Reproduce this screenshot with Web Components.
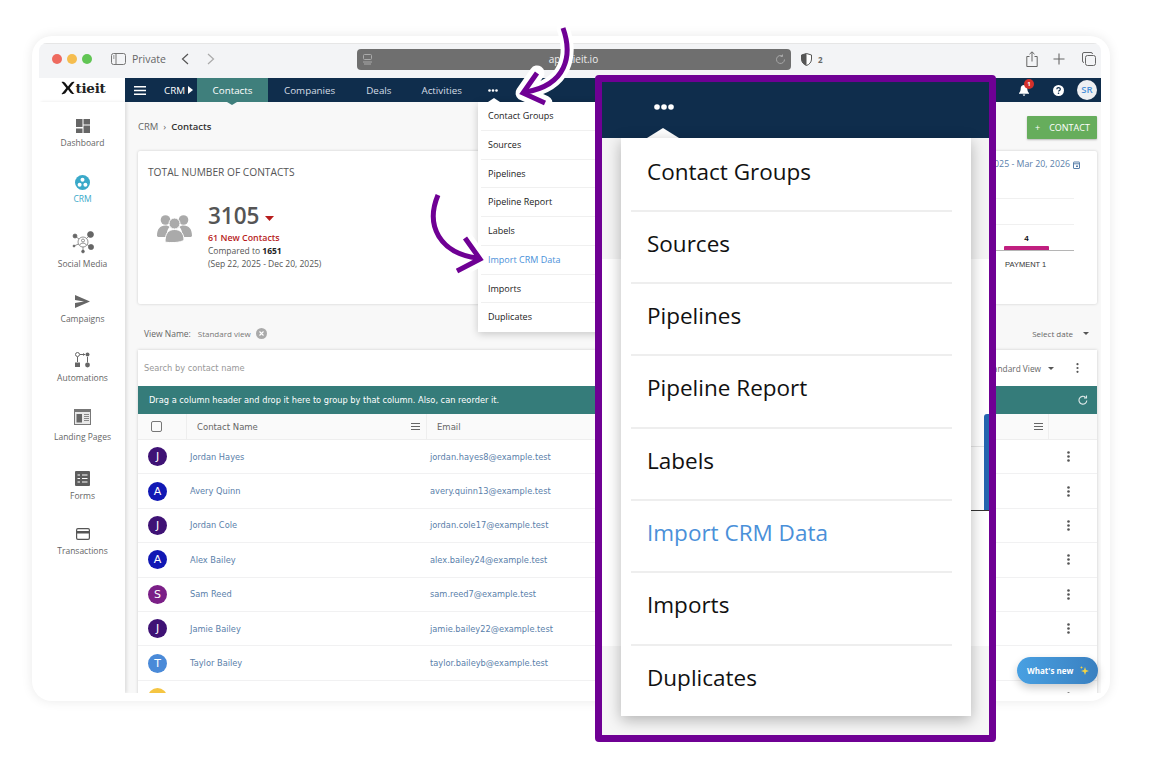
<!DOCTYPE html>
<html>
<head>
<meta charset="utf-8">
<title>Contacts</title>
<style>
    html, body {
        margin: 0;
        background: #fff;
        font-family: "Open Sans", sans-serif;
    }
    body {
        width: 1150px;
        height: 765px;
        overflow: hidden;
        position: relative;
    }
</style>
</head>
<body>
<browser-frame>
    <browser-toolbar></browser-toolbar>
    <app-navbar></app-navbar>
    <div style="display:flex;height:591px">
        <side-nav></side-nav>
        <contacts-page></contacts-page>
    </div>
</browser-frame>
<more-menu></more-menu>
<zoom-panel></zoom-panel>
<curve-arrow d="M563 28C573 56 566 85 526 92" head="M537 73L523 93L545 103"></curve-arrow>
<curve-arrow d="M438 195C425 226 440 253 477 258" head="M465 238L480 259L457 271"></curve-arrow>

<script>
class BrowserFrame extends HTMLElement {
    constructor() {
        super();
        this.attachShadow({mode: 'open'}).innerHTML = `
            <style>
                :host {
                    display: block;
                    box-sizing: border-box;
                    width: 1078px;
                    height: 665px;
                    margin: 36px 0 0 32px;
                    padding: 7px 9px 8px 7px;
                    background: #fff;
                    border-radius: 20px;
                    box-shadow: 0 0 12px rgba(0,0,0,.09);
                }
                div {
                    height: 100%;
                    overflow: hidden;
                    border-radius: 8px 8px 0 0;
                }
            </style>
            <div><slot></slot></div>
        `;
    }
}

class BrowserToolbar extends HTMLElement {
    constructor() {
        super();
        this.attachShadow({mode: 'open'}).innerHTML = `
            <style>
                :host {
                    display: flex;
                    align-items: center;
                    box-sizing: border-box;
                    height: 35px;
                    background: #f3f4f6;
                    border-top: 1px solid #e6e6e6;
                    padding: 0 0 4px 13px;
                    color: #666;
                    font-size: 10.500px;
                }
                i { width: 10px; height: 10px; border-radius: 50%; margin-right: 5px; }
                svg { display: block; flex: none; }
                .url {
                    display: flex;
                    align-items: center;
                    justify-content: space-between;
                    box-sizing: border-box;
                    width: 434px;
                    height: 21px;
                    margin-left: 142px;
                    padding: 0 5px 0 6px;
                    background: #6f6f6f;
                    border-radius: 4px;
                    color: #eee;
                    font-size: 10px;
                }
            </style>
            <i style="background:#ee6a5f"></i>
            <i style="background:#f5bd4f"></i>
            <i style="background:#61c554"></i>
            <svg style="margin-left:14px" width="15" height="12" viewBox="0 0 15 12" fill="none" stroke="#777"><rect x=".5" y=".5" width="14" height="11" rx="2"/><path d="M5 .5v11"/><path d="M2 3h1.500M2 5h1.500"/></svg>
            <span style="margin-left:6px">Private</span>
            <svg style="margin-left:15px" width="8" height="12" viewBox="0 0 8 12" fill="none" stroke="#555" stroke-width="1.200"><path d="M7 1L1.500 6 7 11"/></svg>
            <svg style="margin-left:18px" width="8" height="12" viewBox="0 0 8 12" fill="none" stroke="#aaa" stroke-width="1.200"><path d="M1 1l5.500 5L1 11"/></svg>
            <div class="url">
                <svg width="9" height="11" viewBox="0 0 9 11" fill="none" stroke="#aaa"><rect x=".5" y=".5" width="8" height="5" rx="1"/><path d="M0 8h9M1 10h7"/></svg>
                <span>app.tieit.io</span>
                <svg width="11" height="11" viewBox="0 0 11 11" fill="none" stroke="#a8a8a8"><path d="M9.500 5.500a4 4 0 1 1-2-3.500M7.500 .5v2h-2"/></svg>
            </div>
            <svg style="margin-left:10px" width="11" height="13" viewBox="0 0 11 13"><path d="M5.500 .5L10.500 2v4c0 3-2 5.500-5 6.500C2.500 11.500 .5 9 .5 6V2z" fill="#fff" stroke="#555"/><path d="M5.500 .5L.5 2v4c0 3 2 5.500 5 6.500z" fill="#555"/></svg>
            <span style="margin-left:6px;font-size:8px;font-weight:700">2</span>
            <svg style="margin-left:203px" width="12" height="16" viewBox="0 0 12 16" fill="none" stroke="#666"><path d="M3.500 5.500H.8v10h10.400v-10H8.500M6 10.500V1M3.500 3.200L6 .8l2.500 2.400"/></svg>
            <svg style="margin-left:15px" width="12" height="12" viewBox="0 0 12 12" stroke="#666" stroke-width="1.100"><path d="M6 .5v11M.5 6h11"/></svg>
            <svg style="margin-left:17px" width="14" height="14" viewBox="0 0 14 14" fill="none" stroke="#666"><rect x="3.500" y="3.500" width="10" height="10" rx="2"/><path d="M2 10.500A1.500 1.500 0 0 1 .5 9V2A1.500 1.500 0 0 1 2 .5h7A1.500 1.500 0 0 1 10.500 2"/></svg>
        `;
    }
}

class AppNavbar extends HTMLElement {
    constructor() {
        super();
        this.attachShadow({mode: 'open'}).innerHTML = `
            <style>
                :host {
                    display: flex;
                    height: 24px;
                    background: #fff;
                    color: #d5dde6;
                    font-size: 9.800px;
                }
                .logo {
                    display: flex;
                    align-items: center;
                    justify-content: center;
                    width: 86px;
                    padding: 0 0 4px 2px;
                    box-sizing: border-box;
                    color: #222;
                    font-family: "DejaVu Serif", serif;
                    font-size: 13.500px;
                    font-weight: 700;
                    letter-spacing: -.3px;
                    line-height: 20px;
                }
                .logo svg { margin-right: 1px; }
                nav {
                    flex: 1;
                    display: flex;
                    align-items: center;
                    background: #0f2d4c;
                }
                nav > * { flex: none; }
                .crm { color: #fff; }
                .tab {
                    position: relative;
                    align-self: stretch;
                    display: flex;
                    align-items: center;
                    justify-content: center;
                    width: 71px;
                    background: #3f7f7c;
                    color: #fff;
                    margin: 0 16px 0 4px;
                }
                .tab::after {
                    content: "";
                    position: absolute;
                    left: 30px;
                    top: 100%;
                    border: 5px solid transparent;
                    border-top: 3px solid #3f7f7c;
                    border-bottom: 0;
                }
                .right { margin-left: auto; display: flex; align-items: center; margin-right: 4px; }
                .bell { position: relative; }
                .bell b {
                    position: absolute;
                    left: 5px;
                    top: -6px;
                    width: 10px;
                    height: 10px;
                    border-radius: 50%;
                    background: #d3302b;
                    color: #fff;
                    font-size: 6px;
                    line-height: 10px;
                    text-align: center;
                }
                .user {
                    width: 20px;
                    height: 20px;
                    margin-left: 13px;
                    border-radius: 50%;
                    background: #eef0f3;
                    color: #4a90d9;
                    font-size: 9.500px;
                    font-weight: 600;
                    line-height: 20px;
                    text-align: center;
                }
            </style>
            <div class="logo">
                <svg width="14" height="14" viewBox="0 0 14 14"><path d="M.5 1c1.500-.6 3 0 4 1.200L7 5.500 10 1.800C11 .8 12.500.5 13.500 1L8.700 7l3.300 4.500c.5.700 1 1.200 1.500 1.500-2 .4-3.500-.3-4.500-1.700L7 8.500 4.500 12C3.500 13 2 13.500.5 13l4.800-6z" fill="#111"/></svg>
                <span>tieit</span>
            </div>
            <nav>
                <svg style="margin-left:9px" width="12" height="9" viewBox="0 0 12 9" fill="#fff"><path d="M0 0h12v1.500H0zM0 3.700h12v1.500H0zM0 7.500h12V9H0z"/></svg>
                <span class="crm" style="margin-left:18px">CRM</span>
                <svg style="margin-left:3px" width="5" height="8" viewBox="0 0 5 8" fill="#fff"><path d="M0 0l5 4-5 4z"/></svg>
                <span class="tab">Contacts</span>
                <span style="margin-right:31px">Companies</span>
                <span style="margin-right:30px">Deals</span>
                <span style="margin-right:26px">Activities</span>
                <svg width="10" height="3" viewBox="0 0 10 3" fill="#fff"><circle cx="1.500" cy="1.500" r="1.300"/><circle cx="5" cy="1.500" r="1.300"/><circle cx="8.500" cy="1.500" r="1.300"/></svg>
                <div class="right">
                    <div class="bell">
                        <svg style="display:block" width="10" height="11" viewBox="0 0 10 11" fill="#fff"><path d="M5 0c2 0 3.300 1.500 3.300 3.500 0 2.500.7 3.500 1.700 4.500v.7H0V8c1-1 1.700-2 1.700-4.500C1.700 1.500 3 0 5 0zM3.700 9.500h2.600A1.300 1.300 0 0 1 3.700 9.500z"/></svg>
                        <b>1</b>
                    </div>
                    <svg style="margin-left:24px" width="11" height="11" viewBox="0 0 11 11"><circle cx="5.500" cy="5.500" r="5.500" fill="#fff"/><path d="M3.800 4.200c0-2.200 3.500-2.200 3.500 0 0 1.300-1.700 1.300-1.700 2.400" fill="none" stroke="#0f2d4c" stroke-width="1.200"/><circle cx="5.500" cy="8.300" r=".8" fill="#0f2d4c"/></svg>
                    <div class="user">SR</div>
                </div>
            </nav>
        `;
    }
}

const SIDE_ICONS = {
    dashboard: '<svg width="14" height="14" viewBox="0 0 14 14" fill="#666"><path d="M0 0h6.500v8H0zM7.500 0H14v5.500H7.500zM0 9.500h6.500V14H0zM7.500 6.500H14V14H7.500z"/></svg>',
    crm: '<svg width="15" height="15" viewBox="0 0 15 15"><circle cx="7.500" cy="7.500" r="7.500" fill="#3aa9c9"/><circle cx="7.500" cy="4.700" r="2" fill="#fff"/><circle cx="4.600" cy="9.700" r="2" fill="#fff"/><circle cx="10.400" cy="9.700" r="2" fill="#fff"/></svg>',
    social: '<svg width="22" height="23" viewBox="0 0 22 23" fill="#666" stroke="#666" stroke-width=".7"><path d="M11 11L3 5M11 11l7-7M11 11l8 5M11 11l0 9M11 11L2 15"/><circle cx="11" cy="11" r="5" fill="#fff"/><circle cx="11" cy="9.500" r="1.500" fill="#fff"/><path d="M7.800 14c.5-2.500 5.900-2.500 6.400 0" fill="#fff"/><circle cx="3" cy="5" r="2"/><circle cx="18.500" cy="3.500" r="3"/><circle cx="19" cy="16" r="2.600"/><circle cx="11" cy="20.500" r="1.400"/><circle cx="2" cy="15" r="1"/></svg>',
    campaigns: '<svg width="15" height="13" viewBox="0 0 15 13" fill="#666"><path d="M0 0l15 6.500L0 13V8l9-1.500L0 5z"/></svg>',
    automations: '<svg width="15" height="16" viewBox="0 0 15 16" fill="#666"><circle cx="2.500" cy="2.500" r="2" fill="none" stroke="#666"/><path d="M5 2.500h5" stroke="#666"/><path d="M8 1l2 1.500L8 4z"/><circle cx="12.500" cy="2.500" r="2"/><path d="M0 10.500h5V15H0z"/><circle cx="12.500" cy="13" r="2.400"/><path d="M2.500 5v5M12.500 5v5.500" stroke="#666"/></svg>',
    landing: '<svg width="17" height="16" viewBox="0 0 17 16"><path d="M0 0h17v16H0z" fill="#777"/><path d="M1 3h15v12H1z" fill="#e8e8e8"/><path d="M2.500 5H8v8.500H2.500z" fill="#666"/><path d="M10 5.500h5M10 7.500h5M10 9.500h5M10 11.500h5" stroke="#888"/></svg>',
    forms: '<svg width="15" height="15" viewBox="0 0 15 15"><rect width="15" height="15" rx="1" fill="#5d5d5d"/><path d="M2.500 4H5M7 4h5.500M2.500 7.500H5M7 7.500h5.500M2.500 11H5M7 11h5.500" stroke="#fff" stroke-width="1.100"/></svg>',
    transactions: '<svg width="14" height="12" viewBox="0 0 14 12"><rect x=".6" y=".6" width="12.800" height="10.800" rx="1.300" fill="#fff" stroke="#555" stroke-width="1.200"/><path d="M1 3h12v2.500H1z" fill="#555"/></svg>'
};

class SideItem extends HTMLElement {
    connectedCallback() {
        const active = this.hasAttribute('active');
        this.attachShadow({mode: 'open'}).innerHTML = `
            <style>
                :host {
                    display: flex;
                    flex-direction: column;
                    align-items: center;
                    color: ${active ? '#3aa9c9' : '#666'};
                    font-size: 8.500px;
                    line-height: 12px;
                }
                div { display: flex; align-items: center; justify-content: center; height: var(--icon, 16px); margin-bottom: var(--gap, 4px); }
                svg { display: block; }
            </style>
            <div>${SIDE_ICONS[this.getAttribute('icon')]}</div>
            <span>${this.getAttribute('label')}</span>
        `;
    }
}

class SideNav extends HTMLElement {
    constructor() {
        super();
        this.attachShadow({mode: 'open'}).innerHTML = `
            <style>
                :host {
                    display: block;
                    flex: none;
                    width: 86px;
                    box-sizing: border-box;
                    padding: 16px 0 0 1px;
                    background: #fff;
                    box-shadow: 2px 0 3px rgba(0,0,0,.1);
                    position: relative;
                }
            </style>
            <side-item icon="dashboard" label="Dashboard" style="margin-bottom:25px;--gap:3px"></side-item>
            <side-item icon="crm" label="CRM" active style="margin-bottom:25px;--gap:3px"></side-item>
            <side-item icon="social" label="Social Media" style="margin-bottom:23px;--icon:24px;--gap:4px"></side-item>
            <side-item icon="campaigns" label="Campaigns" style="margin-bottom:27px;--gap:4px"></side-item>
            <side-item icon="automations" label="Automations" style="margin-bottom:25px;--gap:4px"></side-item>
            <side-item icon="landing" label="Landing Pages" style="margin-bottom:27px;--gap:6px"></side-item>
            <side-item icon="forms" label="Forms" style="margin-bottom:24px;--gap:4px"></side-item>
            <side-item icon="transactions" label="Transactions" style="--gap:3px"></side-item>
        `;
    }
}

class StatCard extends HTMLElement {
    constructor() {
        super();
        this.attachShadow({mode: 'open'}).innerHTML = `
            <style>
                :host {
                    display: block;
                    box-sizing: border-box;
                    height: 153px;
                    padding: 14px 10px;
                    background: #fff;
                    border-radius: 2px;
                    box-shadow: 0 0 3px rgba(0,0,0,.18);
                    color: #555;
                    font-size: 8.500px;
                    line-height: 13px;
                }
                h2 { margin: 0; font-size: 10.200px; line-height: 14px; font-weight: 400; }
                .stat { display: flex; align-items: flex-start; margin: 22px 0 0 9px; }
                .stat svg.people { margin: 12px 16px 0 0; }
                .num { display: flex; align-items: center; font-size: 22.500px; line-height: 30px; font-weight: 600; color: #555; }
                .num svg { margin: 4px 0 0 6px; }
                .red { color: #b71c1c; font-weight: 600; font-size: 8.900px; }
                b { color: #222; }
                .range {
                    position: relative;
                    display: flex;
                    justify-content: flex-end;
                }
                .date { position: absolute; top: -7px; right: 7px; color: #5a80aa; font-size: 8.800px; display: flex; align-items: center; gap: 3px; }
                .chart { position: absolute; top: 16px; right: 13px; width: 79px; color: #333; font-family: "Liberation Sans", sans-serif; }
                .line { height: 1px; background: #f0f0f0; margin-bottom: 25px; }
                .val { position: relative; margin-left: 9px; width: 45px; text-align: center; font-weight: 700; font-size: 8px; line-height: 10px; margin-top: -16px; color: #111; }
                .bar { margin: 2px 0 0 9px; width: 45px; height: 4px; background: #c01f7f; border-radius: 1px 1px 0 0; }
                .axis { height: 1px; background: #b5b5b5; }
                .lab { margin: 8px 0 0 10px; font-size: 7.500px; line-height: 11px; white-space: nowrap; }
            </style>
            <div class="range">
                <div class="date">
                    <span>Dec 20, 2025 - Mar 20, 2026</span>
                    <svg width="7" height="8" viewBox="0 0 7 8" fill="none" stroke="#5a80aa"><rect x=".5" y="1" width="6" height="6.500" rx=".5"/><path d="M0 2.800h7"/><path d="M3 4.500h2v1.500H3z" fill="#5a80aa" stroke="none"/></svg>
                </div>
                <div class="chart">
                    <div class="line" style="margin-top:17px"></div>
                    <div class="line"></div>
                    <div class="val">4</div>
                    <div class="bar"></div>
                    <div class="axis"></div>
                    <div class="lab">PAYMENT 1</div>
                </div>
            </div>
            <h2>TOTAL NUMBER OF CONTACTS</h2>
            <div class="stat">
                <svg class="people" width="35" height="30" viewBox="0 0 35 30" fill="#aaa"><circle cx="8.500" cy="7" r="4.800"/><circle cx="26.500" cy="7" r="4.800"/><path d="M0 23c0-7 3-10.500 8.500-10.500 2 0 3 .5 4 1.500-2 2-3 5-3 10H1z"/><path d="M35 23c0-7-3-10.500-8.500-10.500-2 0-3 .5-4 1.500 2 2 3 5 3 10H34z"/><circle cx="17.500" cy="10.500" r="5.500" fill="#aaa" stroke="#fff" stroke-width="1"/><path d="M8 29c0-8 3-12.500 9.500-12.500S27 21 27 27c-3 3-15 3-19 2z" stroke="#fff" stroke-width="1"/></svg>
                <div>
                    <div class="num">3105<svg width="9" height="5" viewBox="0 0 9 5" fill="#b71c1c"><path d="M0 0h9L4.500 5z"/></svg></div>
                    <div class="red">61 New Contacts</div>
                    <div>Compared to <b>1651</b></div>
                    <div>(Sep 22, 2025 - Dec 20, 2025)</div>
                </div>
            </div>
        `;
    }
}

class ContactRow extends HTMLElement {
    connectedCallback() {
        const name = this.getAttribute('name');
        this.attachShadow({mode: 'open'}).innerHTML = `
            <style>
                :host {
                    display: flex;
                    align-items: center;
                    flex: none;
                    box-sizing: border-box;
                    height: 34.400px;
                    background: #fff;
                    border-bottom: 1.500px solid #f1f1f2;
                    color: #5a80aa;
                    font-family: "DejaVu Sans", sans-serif;
                    font-size: 8.250px;
                }
                .av {
                    flex: none;
                    width: 19px;
                    height: 19px;
                    margin: 0 23px 0 10px;
                    border-radius: 50%;
                    background: ${this.getAttribute('color')};
                    color: #fff;
                    font-size: 11px;
                    line-height: 19px;
                    text-align: center;
                }
                .name { flex: none; width: 240px; }
                .mail { flex: 1; }
                svg { flex: none; margin-right: 27px; }
            </style>
            <span class="av">${name.charAt(0)}</span>
            <span class="name">${name}</span>
            <span class="mail">${this.getAttribute('mail')}</span>
            <svg width="3" height="11" viewBox="0 0 3 11" fill="#555"><circle cx="1.500" cy="1.500" r="1.300"/><circle cx="1.500" cy="5.500" r="1.300"/><circle cx="1.500" cy="9.500" r="1.300"/></svg>
        `;
    }
}

class ContactsTable extends HTMLElement {
    constructor() {
        super();
        const lines = '<svg width="9" height="7" viewBox="0 0 9 7" fill="#666"><path d="M0 0h9v1H0zM0 3h9v1H0zM0 6h9v1H0z"/></svg>';
        this.attachShadow({mode: 'open'}).innerHTML = `
            <style>
                :host {
                    display: block;
                    box-shadow: 0 0 3px rgba(0,0,0,.18);
                    font-family: "DejaVu Sans", sans-serif;
                    font-size: 8.250px;
                    color: #666;
                    background: #fff;
                }
                .search {
                    display: flex;
                    align-items: center;
                    height: 36px;
                    padding: 0 18px 0 6px;
                    color: #999;
                }
                .view { margin-left: auto; display: flex; align-items: center; color: #666; font-family: "Open Sans", sans-serif; font-size: 8.300px; }
                .group {
                    display: flex;
                    align-items: center;
                    justify-content: space-between;
                    height: 28px;
                    padding: 0 9px 0 11px;
                    background: #357c7a;
                    color: #fff;
                }
                .head {
                    display: flex;
                    align-items: stretch;
                    height: 26px;
                    background: #fafafa;
                    border-bottom: 1px solid #eee;
                    box-sizing: border-box;
                    font-size: 8.500px;
                }
                .head > div { display: flex; align-items: center; box-sizing: border-box; border-right: 1px solid #eee; }
                .check { width: 49px; padding-left: 13px; }
                .check i { width: 9px; height: 9px; border: 1.200px solid #777; border-radius: 2px; display: block; }
                .cn { width: 240px; padding: 0 6px 0 10px; justify-content: space-between; }
                .em { flex: 1; padding: 0 5px 0 10px; justify-content: space-between; }
                .end { width: 48px; border-right: 0 !important; }
            </style>
            <div class="search">
                <span>Search by contact name</span>
                <div class="view">
                    <span>Standard View</span>
                    <svg style="margin:0 22px 0 7px" width="6" height="3" viewBox="0 0 6 3" fill="#555"><path d="M0 0h6L3 3z"/></svg>
                    <svg width="3" height="10" viewBox="0 0 3 10" fill="#555"><circle cx="1.500" cy="1.200" r="1.100"/><circle cx="1.500" cy="5" r="1.100"/><circle cx="1.500" cy="8.800" r="1.100"/></svg>
                </div>
            </div>
            <div class="group">
                <span>Drag a column header and drop it here to group by that column. Also, can reorder it.</span>
                <svg width="10" height="10" viewBox="0 0 10 10" fill="none" stroke="#dfe9e9" stroke-width="1.100"><path d="M8.800 5.500a3.900 3.900 0 1 1-1.300-3.200M8.500 .5v2.500H6"/></svg>
            </div>
            <div class="head">
                <div class="check"><i></i></div>
                <div class="cn"><span>Contact Name</span>${lines}</div>
                <div class="em"><span>Email</span>${lines}</div>
                <div class="end"></div>
            </div>
            <slot></slot>
        `;
    }
}

class ContactsPage extends HTMLElement {
    constructor() {
        super();
        this.attachShadow({mode: 'open'}).innerHTML = `
            <style>
                :host {
                    display: block;
                    flex: 1;
                    box-sizing: border-box;
                    padding: 0 4px 0 13px;
                    background: #f8f8f8;
                    color: #666;
                    overflow: hidden;
                }
                .crumb {
                    display: flex;
                    align-items: center;
                    justify-content: space-between;
                    height: 49px;
                    font-size: 9.500px;
                }
                .crumb b { color: #333; font-weight: 600; }
                button {
                    display: flex;
                    align-items: center;
                    gap: 9px;
                    box-sizing: border-box;
                    width: 70px;
                    height: 23px;
                    padding: 0 0 0 8px;
                    margin-top: 1px;
                    border: 0;
                    border-radius: 1px;
                    background: #66ad5c;
                    box-shadow: 0 1px 2px rgba(0,0,0,.25);
                    color: #fff;
                    font: 400 9px "Open Sans", sans-serif;
                }
                .views {
                    display: flex;
                    align-items: center;
                    justify-content: space-between;
                    height: 46px;
                    padding: 12px 8px 0 6px;
                    box-sizing: border-box;
                    font-size: 8.500px;
                }
                .views svg { display: block; }
                .tag { display: flex; align-items: center; gap: 5px; margin-left: 7px; color: #777; font-size: 8px; }
                .left { display: flex; align-items: center; }
                .right { display: flex; align-items: center; gap: 10px; font-size: 8px; }
            </style>
            <div class="crumb">
                <span>CRM &nbsp;›&nbsp; <b>Contacts</b></span>
                <button><span>+</span><span>CONTACT</span></button>
            </div>
            <stat-card></stat-card>
            <div class="views">
                <div class="left">
                    <span>View Name:</span>
                    <span class="tag">Standard view
                        <svg width="11" height="11" viewBox="0 0 11 11"><circle cx="5.500" cy="5.500" r="5.500" fill="#aaa"/><path d="M3.500 3.500l4 4m0-4l-4 4" stroke="#fff" stroke-width="1.100"/></svg>
                    </span>
                </div>
                <div class="right">
                    <span>Select date</span>
                    <svg width="6" height="3" viewBox="0 0 6 3" fill="#555"><path d="M0 0h6L3 3z"/></svg>
                </div>
            </div>
            <contacts-table>
                <contact-row name="Jordan Hayes" mail="jordan.hayes8@example.test" color="#3f1275"></contact-row>
                <contact-row name="Avery Quinn" mail="avery.quinn13@example.test" color="#1118b4"></contact-row>
                <contact-row name="Jordan Cole" mail="jordan.cole17@example.test" color="#3f1275"></contact-row>
                <contact-row name="Alex Bailey" mail="alex.bailey24@example.test" color="#1118b4"></contact-row>
                <contact-row name="Sam Reed" mail="sam.reed7@example.test" color="#7b1f87"></contact-row>
                <contact-row name="Jamie Bailey" mail="jamie.bailey22@example.test" color="#3f1275"></contact-row>
                <contact-row name="Taylor Bailey" mail="taylor.baileyb@example.test" color="#4a8ad8"></contact-row>
                <contact-row name="" mail="" color="#f5c542"></contact-row>
            </contacts-table>
            <whats-new></whats-new>
        `;
    }
}

class WhatsNew extends HTMLElement {
    constructor() {
        super();
        this.attachShadow({mode: 'open'}).innerHTML = `
            <style>
                :host {
                    position: absolute;
                    left: 1017px;
                    top: 657px;
                    display: flex;
                    align-items: center;
                    justify-content: space-between;
                    box-sizing: border-box;
                    width: 81px;
                    height: 27px;
                    padding: 0 9px 0 10px;
                    border-radius: 14px;
                    background: linear-gradient(90deg, #48a0e2, #3a80c0);
                    box-shadow: 0 4px 8px rgba(0,0,0,.2);
                    color: #fff;
                    font: 700 8px "Open Sans", sans-serif;
                }
            </style>
            <span>What's new</span>
            <svg width="9" height="10" viewBox="0 0 9 10" fill="#f5d442"><path d="M5 1l1 3 3 1-3 1-1 3-1-3-3-1 3-1z"/><path d="M1.500 0l.4 1.100L3 1.500l-1.100.4L1.500 3l-.4-1.100L0 1.500l1.100-.4z"/></svg>
        `;
    }
}

class MoreMenu extends HTMLElement {
    constructor() {
        super();
        const items = ['Contact Groups', 'Sources', 'Pipelines', 'Pipeline Report', 'Labels', 'Import CRM Data', 'Imports', 'Duplicates'];
        this.attachShadow({mode: 'open'}).innerHTML = `
            <style>
                :host {
                    position: absolute;
                    left: 478px;
                    top: 102px;
                    width: 130px;
                    height: 230px;
                    background: #fff;
                    box-shadow: 0 2px 8px rgba(0,0,0,.2);
                    font-size: 9px;
                    color: #222;
                }
                :host::before {
                    content: "";
                    position: absolute;
                    left: 10px;
                    top: -4px;
                    border: 6px solid transparent;
                    border-bottom: 4px solid #fff;
                    border-top: 0;
                }
                div {
                    height: 28.750px;
                    box-sizing: border-box;
                    margin-left: 3px;
                    padding-left: 7px;
                    line-height: 27px;
                    border-bottom: 1px solid #f0f0f0;
                }
                div:last-child { border-bottom: 0; }
                .on { color: #4a90d9; }
            </style>
            ${items.map(i => `<div class="${i === 'Import CRM Data' ? 'on' : ''}">${i}</div>`).join('')}
        `;
    }
}

class ZoomPanel extends HTMLElement {
    constructor() {
        super();
        const items = ['Contact Groups', 'Sources', 'Pipelines', 'Pipeline Report', 'Labels', 'Import CRM Data', 'Imports', 'Duplicates'];
        this.attachShadow({mode: 'open'}).innerHTML = `
            <style>
                :host {
                    position: absolute;
                    left: 595px;
                    top: 75px;
                    box-sizing: border-box;
                    width: 401px;
                    height: 667px;
                    border: 7px solid #6f0094;
                    border-radius: 4px;
                    background: linear-gradient(#f4f4f4 0, #f4f4f4 177px, #fff 177px, #fff 564px, #f6f6f6 564px);
                }
                .bar {
                    display: flex;
                    align-items: center;
                    height: 56px;
                    padding: 0 0 6px 52px;
                    box-sizing: border-box;
                    background: #0f2d4c;
                    position: relative;
                }
                .bar::after {
                    content: "";
                    position: absolute;
                    left: 45px;
                    bottom: 0;
                    border: 16px solid transparent;
                    border-bottom: 10px solid #fff;
                    border-top: 0;
                }
                .menu {
                    position: relative;
                    box-sizing: border-box;
                    width: 350px;
                    height: 578px;
                    margin-left: 19px;
                    padding-top: 1.500px;
                    background: #fff;
                    box-shadow: 0 4px 14px rgba(0,0,0,.28);
                    color: #111;
                    font-size: 22.500px;
                }
                .menu div {
                    height: 72.300px;
                    box-sizing: border-box;
                    margin: 0 19px 0 10px;
                    padding-left: 16px;
                    line-height: 63px;
                    border-bottom: 2px solid #eee;
                }
                .menu div:last-child { border-bottom: 0; }
                .menu .on { color: #4a90d9; }
                .blue {
                    position: absolute;
                    right: 0;
                    top: 332px;
                    width: 5px;
                    height: 96px;
                    background: #2566b0;
                    border-radius: 3px 0 0 0;
                }
                .base {
                    position: absolute;
                    right: 0;
                    top: 428px;
                    width: 18px;
                    height: 1px;
                    background: #333;
                }
                .grid {
                    position: absolute;
                    right: 5px;
                    top: 364px;
                    width: 13px;
                    height: 1px;
                    background: #e6e6e6;
                }
            </style>
            <i class="blue"></i>
            <i class="base"></i>
            <i class="grid"></i>
            <div class="bar">
                <svg width="20" height="6" viewBox="0 0 20 6" fill="#fff"><circle cx="3" cy="3" r="2.800"/><circle cx="10" cy="3" r="2.800"/><circle cx="17" cy="3" r="2.800"/></svg>
            </div>
            <div class="menu">
                ${items.map(i => `<div class="${i === 'Import CRM Data' ? 'on' : ''}">${i}</div>`).join('')}
            </div>
        `;
    }
}

class CurveArrow extends HTMLElement {
    connectedCallback() {
        const d = this.getAttribute('d');
        const head = this.getAttribute('head');
        this.attachShadow({mode: 'open'}).innerHTML = `
            <style>
                :host { position: absolute; left: 0; top: 0; width: 1150px; height: 765px; pointer-events: none; }
                svg { display: block; }
            </style>
            <svg width="1150" height="765" viewBox="0 0 1150 765" fill="none" stroke-linejoin="miter">
                <path d="${d}" stroke="#fff" stroke-width="13" stroke-linecap="round"/>
                <path d="${head}" stroke="#fff" stroke-width="15" stroke-linecap="round" stroke-linejoin="round"/>
                <path d="${d}" stroke="#6f0094" stroke-width="5"/>
                <path d="${head}" stroke="#6f0094" stroke-width="5"/>
            </svg>
        `;
    }
}

customElements.define('browser-frame', BrowserFrame);
customElements.define('browser-toolbar', BrowserToolbar);
customElements.define('app-navbar', AppNavbar);
customElements.define('side-item', SideItem);
customElements.define('side-nav', SideNav);
customElements.define('stat-card', StatCard);
customElements.define('contact-row', ContactRow);
customElements.define('contacts-table', ContactsTable);
customElements.define('whats-new', WhatsNew);
customElements.define('contacts-page', ContactsPage);
customElements.define('more-menu', MoreMenu);
customElements.define('zoom-panel', ZoomPanel);
customElements.define('curve-arrow', CurveArrow);
</script>
</body>
</html>
